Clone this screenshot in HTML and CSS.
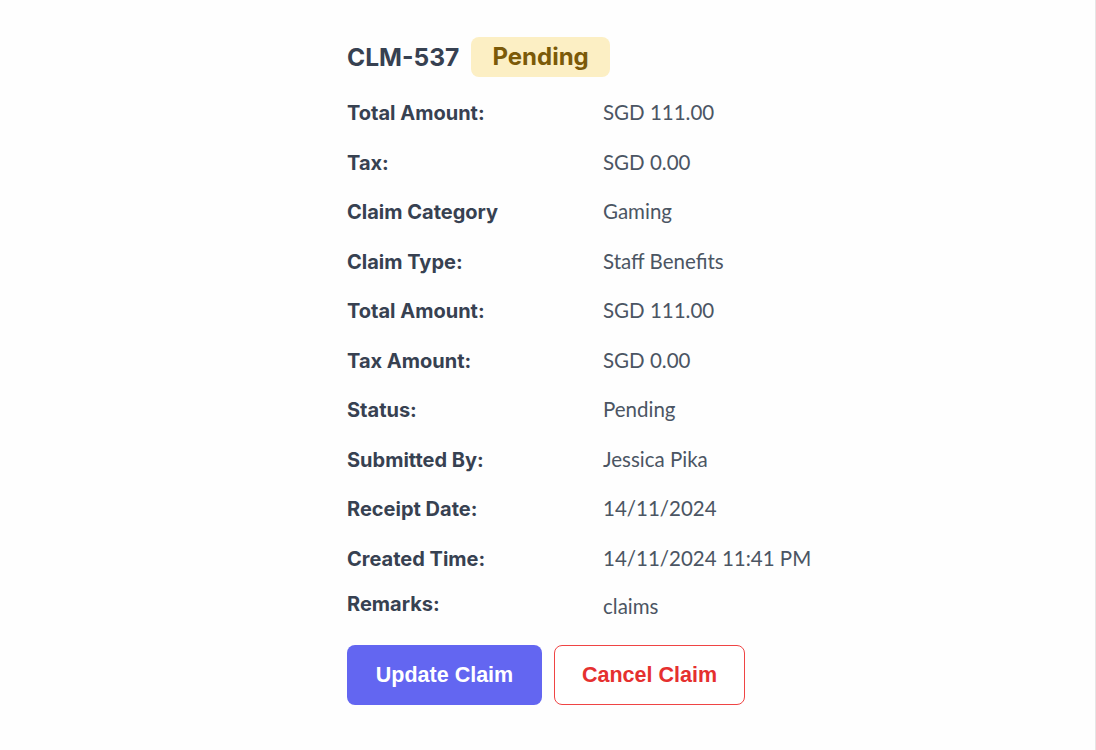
FILE: index.html
```html
<!DOCTYPE html>
<html>
<head>
<meta charset="utf-8">
<link rel="stylesheet" href="styles.css">
</head>
<body>
<div class="page">
  <div class="detail">
    <div class="header">
      <h1 class="claim-id">CLM-537</h1>
      <span class="badge">Pending</span>
    </div>
    <div class="rows">
      <div class="row"><span class="label">Total Amount:</span><span class="value">SGD 111.00</span></div>
      <div class="row"><span class="label">Tax:</span><span class="value">SGD 0.00</span></div>
      <div class="row"><span class="label">Claim Category</span><span class="value">Gaming</span></div>
      <div class="row"><span class="label">Claim Type:</span><span class="value">Staff Benefits</span></div>
      <div class="row"><span class="label">Total Amount:</span><span class="value">SGD 111.00</span></div>
      <div class="row"><span class="label">Tax Amount:</span><span class="value">SGD 0.00</span></div>
      <div class="row"><span class="label">Status:</span><span class="value">Pending</span></div>
      <div class="row"><span class="label">Submitted By:</span><span class="value">Jessica Pika</span></div>
      <div class="row"><span class="label">Receipt Date:</span><span class="value">14/11/2024</span></div>
      <div class="row"><span class="label">Created Time:</span><span class="value">14/11/2024 11:41 PM</span></div>
      <div class="row remarks"><span class="label">Remarks:</span><span class="value">claims</span></div>
    </div>
    <div class="actions">
      <button class="btn btn-primary">Update Claim</button>
      <button class="btn btn-outline">Cancel Claim</button>
    </div>
  </div>
</div>
</body>
</html>
```
FILE: styles.css
```css
html, body {
  margin: 0;
  padding: 0;
  background: #ffffff;
}
body {
  font-family: "Inter", "Lato", sans-serif;
  color: #374151;
}
.page {
  min-height: 750px;
  box-sizing: border-box;
  border-right: 1px solid #e5e5e5;
  background: #fefefe;
  padding: 36px 0 0 347px;
}
.header {
  display: flex;
  align-items: center;
  gap: 12px;
  height: 41px;
}
.claim-id {
  margin: 0;
  font-size: 24.6px;
  font-weight: 700;
  color: #374151;
}
.badge {
  display: inline-flex;
  align-items: center;
  height: 40px;
  padding: 0 21px;
  border-radius: 8px;
  background: #fcefc4;
  color: #7b5a08;
  font-size: 24px;
  font-weight: 700;
}
.rows {
  margin-top: 21px;
}
.row {
  display: grid;
  grid-template-columns: 256px auto;
  align-items: baseline;
  height: 28px;
  line-height: 28px;
  margin-bottom: 21.5px;
  font-size: 20px;
}
.row.remarks {
  margin-top: -4px;
  margin-bottom: 0;
}
.row.remarks .value {
  position: relative;
  top: 3px;
}
.label {
  font-family: "Inter", sans-serif;
  font-weight: 700;
  color: #374151;
}
.value {
  font-family: "Lato", sans-serif;
  font-size: 20.5px;
  color: #4b5563;
}
.actions {
  display: flex;
  gap: 12px;
  margin-top: 28px;
}
.btn {
  height: 60px;
  border-radius: 8px;
  font-family: "Liberation Sans", Arial, sans-serif;
  font-size: 21.5px;
  font-weight: 700;
  cursor: pointer;
}
.btn-primary {
  width: 195px;
  background: #6366f1;
  border: none;
  color: #ffffff;
}
.btn-outline {
  width: 191px;
  background: #ffffff;
  border: 1.5px solid #ef4444;
  color: #e5302f;
}
```
